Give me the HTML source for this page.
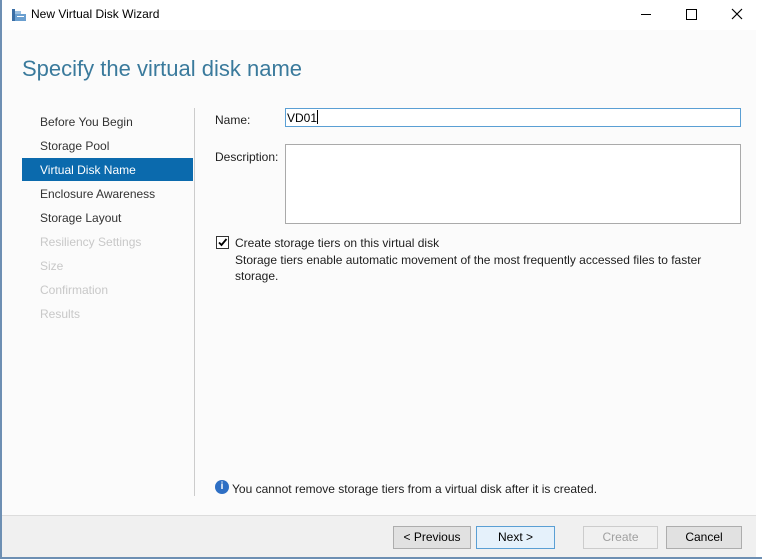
<!DOCTYPE html>
<html><head><style>
body{margin:0;width:762px;height:559px;overflow:hidden;background:#fff;font-family:"Liberation Sans",sans-serif;font-size:12px;color:#1e1e1e;position:relative}
.a{position:absolute;white-space:nowrap}
.nav{left:40px;font-size:12px;color:#333}
.dis{color:#c8c8c8}
.btn{position:absolute;top:526px;height:21px;border:1px solid #adadad;background:#e1e1e1;font-size:12px;text-align:center;line-height:21px;color:#000}
</style></head><body>
<div class="a" style="left:0;top:0;width:2px;height:559px;background:#6d8fb3"></div>
<div class="a" style="left:756px;top:0;width:6px;height:559px;background:#fff"></div>
<div class="a" style="left:2px;top:30px;width:754px;height:486px;background:#fbfbfb"></div>
<svg class="a" style="left:11px;top:8px" width="16" height="14"><rect x="1" y="1" width="3" height="12" fill="#3a6ea5"/><rect x="4" y="6" width="11" height="7" fill="#6a9fd0"/><rect x="6" y="8" width="7" height="1" fill="#fff"/><rect x="4" y="3" width="6" height="3" fill="#9bbfe0"/></svg>
<div class="a" style="left:31px;top:7px;font-size:12px;color:#000">New Virtual Disk Wizard</div>
<div class="a" style="left:641px;top:14px;width:10px;height:1px;background:#000"></div>
<div class="a" style="left:686px;top:9px;width:9px;height:9px;border:1px solid #000"></div>
<svg class="a" style="left:731px;top:8px" width="12" height="12"><path d="M1 1L11 11M11 1L1 11" stroke="#000" stroke-width="1.2"/></svg>
<div class="a" style="left:22px;top:56px;font-size:22px;color:#3a7a9c">Specify the virtual disk name</div>
<div class="a nav" style="top:115px">Before You Begin</div>
<div class="a nav" style="top:139px">Storage Pool</div>
<div class="a" style="left:22px;top:158px;width:171px;height:23px;background:#0b6aad"></div>
<div class="a nav" style="top:163px;color:#fff">Virtual Disk Name</div>
<div class="a nav" style="top:187px">Enclosure Awareness</div>
<div class="a nav" style="top:211px">Storage Layout</div>
<div class="a nav dis" style="top:235px">Resiliency Settings</div>
<div class="a nav dis" style="top:259px">Size</div>
<div class="a nav dis" style="top:283px">Confirmation</div>
<div class="a nav dis" style="top:307px">Results</div>
<div class="a" style="left:194px;top:108px;width:1px;height:388px;background:#ccc"></div>
<div class="a" style="left:215px;top:113px">Name:</div>
<div class="a" style="left:285px;top:108px;width:454px;height:17px;border:1px solid #5a9fd4;background:#fff"></div>
<div class="a" style="left:287px;top:110px;color:#000">VD01<span style="display:inline-block;width:1px;height:14px;background:#000;vertical-align:-2px"></span></div>
<div class="a" style="left:215px;top:150px">Description:</div>
<div class="a" style="left:285px;top:144px;width:454px;height:78px;border:1px solid #aaa;background:#fff"></div>
<div class="a" style="left:216px;top:236px;width:11px;height:11px;border:1px solid #333;background:#fff"></div>
<svg class="a" style="left:217px;top:237px" width="11" height="11"><path d="M2 5.5L4.5 8L9.5 2" stroke="#000" stroke-width="1.8" fill="none"/></svg>
<div class="a" style="left:235px;top:236px">Create storage tiers on this virtual disk</div>
<div class="a" style="left:235px;top:253px">Storage tiers enable automatic movement of the most frequently accessed files to faster</div>
<div class="a" style="left:235px;top:269px">storage.</div>
<div class="a" style="left:215px;top:480px;width:14px;height:14px;border-radius:50%;background:#2e6fc4;color:#fff;font-size:10px;font-weight:bold;text-align:center;line-height:14px">i</div>
<div class="a" style="left:232px;top:482px">You cannot remove storage tiers from a virtual disk after it is created.</div>
<div class="a" style="left:2px;top:515px;width:754px;height:42px;background:#f0f0f0;border-top:1px solid #dcdcdc"></div>
<div class="a" style="left:0;top:557px;width:762px;height:2px;background:#6d8fb3"></div>
<div class="btn" style="left:393px;width:76px">&lt; Previous</div>
<div class="btn" style="left:476px;width:77px;border-color:#5a9fd4;background:#e5f1fb">Next &gt;</div>
<div class="btn" style="left:583px;width:73px;border-color:#ccc;background:#f0f0f0;color:#a0a0a0">Create</div>
<div class="btn" style="left:666px;width:74px">Cancel</div>
</body></html>
